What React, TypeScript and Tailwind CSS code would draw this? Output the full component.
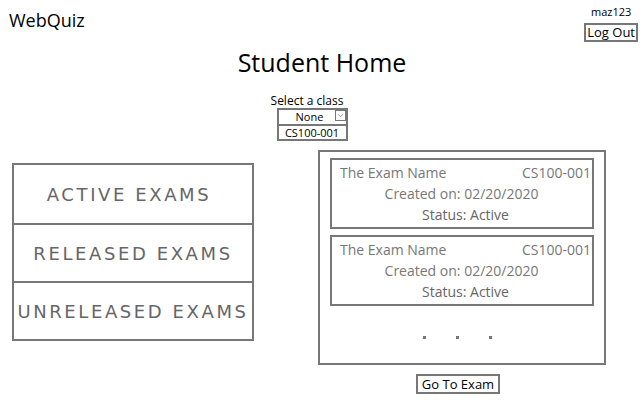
import { ChevronDown } from 'lucide-react';

interface Exam {
  name: string;
  course: string;
  created: string;
  status: string;
}

const exams: Exam[] = [
  { name: 'The Exam Name', course: 'CS100-001', created: '02/20/2020', status: 'Active' },
  { name: 'The Exam Name', course: 'CS100-001', created: '02/20/2020', status: 'Active' },
];

const categories = ['ACTIVE EXAMS', 'RELEASED EXAMS', 'UNRELEASED EXAMS'];

function ExamCard({ exam }: { exam: Exam }) {
  return (
    <div className="border-2 border-[#777] h-[71px] pl-[8px] pr-[1px] pt-[2px] text-[14px] leading-[21px] text-[#777]">
      <div className="flex justify-between">
        <span>{exam.name}</span>
        <span>{exam.course}</span>
      </div>
      <div className="text-center pr-[8px]">Created on: {exam.created}</div>
      <div className="text-center text-[#666]">Status: {exam.status}</div>
    </div>
  );
}

export default function App() {
  return (
    <div className="w-[640px] h-[400px] bg-white relative overflow-hidden font-['Open_Sans',sans-serif] text-black">
      {/* Header */}
      <div className="flex justify-between">
        <div className="pl-[9px] pt-[8px] text-[18px] leading-[24px]">WebQuiz</div>
        <div className="flex flex-col items-center pr-[2px] pt-[4px]">
          <span className="text-[11px] leading-[16px]">maz123</span>
          <button className="mt-[3px] border-2 border-[#777] px-[1px] h-[19px] text-[13px] leading-[15px]">
            Log Out
          </button>
        </div>
      </div>

      <h1 className="text-center text-[25px] leading-[32px] mt-[4px] pl-[4px]">Student Home</h1>

      {/* Class select */}
      <div className="flex flex-col items-center mt-[15px] pr-[14px]">
        <span className="text-[12px] leading-[15px] pr-[12px]">Select a class</span>
        <div className="w-[71px] -ml-[2px]">
          <div className="relative border-2 border-[#777] h-[18px] text-[11px] leading-[14px] text-center pr-[5px]">
            None
            <div className="absolute right-0 top-0 w-[11px] h-[11px] border border-[#777] flex items-center justify-center bg-white">
              <ChevronDown className="w-[11px] h-[11px] text-[#777]" strokeWidth={2} />
            </div>
          </div>
          <div className="border-2 border-t-0 border-[#777] h-[15px] text-[11px] leading-[13px] text-center">
            CS100-001
          </div>
        </div>
      </div>

      {/* Body */}
      <div className="flex items-start mt-[9px]">
        <div className="ml-[12px] mt-[13px] w-[242px] border-2 border-[#777] font-['DejaVu_Sans',sans-serif] text-[#666]">
          {categories.map((cat, i) => (
            <div
              key={cat}
              className={`h-[58px] flex items-center justify-center text-[18px] tracking-[2.6px] ${i > 0 ? 'border-t-2 border-[#777]' : 'pr-[8px]'}`}
            >
              {cat}
            </div>
          ))}
        </div>

        <div className="ml-[64px] flex flex-col items-center">
          <div className="w-[288px] h-[215px] border-2 border-[#777] px-[10px] pt-[6px]">
            <div className="flex flex-col gap-[6px]">
              {exams.map((exam, i) => (
                <ExamCard key={i} exam={exam} />
              ))}
            </div>
            <div className="flex justify-center gap-[30px] mt-[30px] pr-[10px]">
              <span className="w-[3px] h-[3px] bg-[#777]" />
              <span className="w-[3px] h-[3px] bg-[#777]" />
              <span className="w-[3px] h-[3px] bg-[#777]" />
            </div>
          </div>
          <button className="mt-[9px] border-2 border-[#777] h-[20px] px-[4px] text-[13px] leading-[16px] mr-[8px]">
            Go To Exam
          </button>
        </div>
      </div>
    </div>
  );
}
